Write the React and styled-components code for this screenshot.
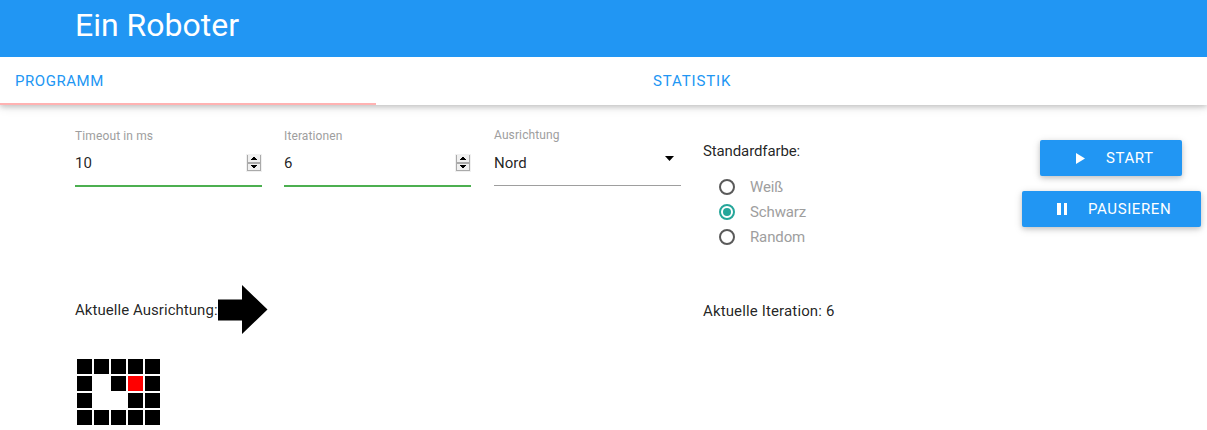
import React from "react";
import styled, { createGlobalStyle } from "styled-components";

const GlobalStyle = createGlobalStyle`
  *, *::before, *::after { box-sizing: border-box; }
  html, body { margin: 0; overflow: hidden; background: #fff; }
  body {
    font-family: Roboto, "Liberation Sans", sans-serif;
    font-size: 15px;
    line-height: 22px;
    color: rgba(0, 0, 0, 0.87);
  }
`;

const Page = styled.div`
  width: 1207px;
  height: 430px;
  overflow: hidden;
`;

const Header = styled.header`
  position: relative;
  z-index: 1;
  height: 57px;
  padding-left: 75px;
  background: #2196f3;
`;

const Title = styled.h1`
  margin: 0;
  font-size: 32px;
  font-weight: 400;
  line-height: 50px;
  color: #fff;
`;

const Tabs = styled.nav`
  display: flex;
  height: 48px;
  background: #fff;
  box-shadow: 0 2px 5px 0 rgba(0, 0, 0, 0.16), 0 2px 10px 0 rgba(0, 0, 0, 0.12);
`;

const Tab = styled.div`
  width: ${(p) => p.$width}px;
  height: 48px;
  padding-left: 15px;
  line-height: 48px;
  letter-spacing: ${(p) => p.$spacing}px;
  text-transform: uppercase;
  color: #2196f3;
`;

const ActiveTab = styled(Tab)`
  border-bottom: 2px solid #ffb2b2;
`;

const Controls = styled.section`
  display: flex;
  height: 173px;
  padding-left: 75px;
`;

const Field = styled.div`
  width: 187px;
  margin-right: ${(p) => p.$gap}px;
  padding-top: 22px;
`;

const Label = styled.div`
  height: 16px;
  margin-top: ${(p) => p.$shift || 0}px;
  margin-bottom: ${(p) => -(p.$shift || 0)}px;
  font-size: 12px;
  letter-spacing: 0.12px;
  line-height: 18px;
  color: #9e9e9e;
`;

const Value = styled.div`
  display: flex;
  justify-content: space-between;
  height: ${(p) => (p.$valid ? 44 : 43)}px;
  padding-top: 9px;
  border-bottom: ${(p) => (p.$valid ? "2px solid #4caf50" : "1px solid #9e9e9e")};
`;

const Spinner = styled.svg`
  display: block;
  width: 16px;
  height: 18px;
  margin-top: 2px;
`;

const Caret = styled.svg`
  display: block;
  width: 9px;
  height: 5px;
  margin: 4px 7px 0 0;
`;

const ColorGroup = styled.div`
  width: 319px;
  padding-top: 35px;
  letter-spacing: -0.12px;
`;

const Options = styled.div`
  padding: 12px 0 0 16px;
`;

const Option = styled.label`
  display: flex;
  align-items: center;
  gap: 15px;
  height: 25px;
  color: #9e9e9e;
`;

const Radio = styled.span`
  width: 16px;
  height: 16px;
  border: 2px solid ${(p) => (p.$on ? "#26a69a" : "#5a5a5a")};
  border-radius: 50%;
  padding: 2px;
  &::before {
    content: "";
    display: block;
    width: 8px;
    height: 8px;
    border-radius: 50%;
    background: ${(p) => (p.$on ? "#26a69a" : "transparent")};
  }
`;

const Actions = styled.div`
  display: flex;
  flex-direction: column;
  align-items: center;
  gap: 15px;
  width: 179px;
  padding-top: 35px;
`;

const Button = styled.button`
  display: flex;
  flex-shrink: 0;
  width: ${(p) => p.$width}px;
  height: 36px;
  margin-right: ${(p) => p.$offset || 0}px;
  padding: 0 0 0 30px;
  border: 0;
  border-radius: 2px;
  background: #2196f3;
  color: #fff;
  font: 400 15px/36px Roboto, sans-serif;
  letter-spacing: 0.6px;
  text-transform: uppercase;
  box-shadow: 0 2px 5px 0 rgba(0, 0, 0, 0.16), 0 2px 10px 0 rgba(0, 0, 0, 0.12);
`;

const ButtonIcon = styled.svg`
  width: 21px;
  height: 36px;
  margin-right: 15px;
  fill: #fff;
`;

const Status = styled.section`
  display: flex;
  padding: 7px 0 0 75px;
  height: 80px;
`;

const Direction = styled.div`
  display: flex;
  width: 628px;
  line-height: 50px;
  letter-spacing: 0.05px;
`;

const Arrow = styled.svg`
  width: 50px;
  height: 50px;
`;

const Iteration = styled.div`
  line-height: 52px;
  letter-spacing: 0.14px;
`;

const Board = styled.div`
  display: grid;
  grid-template-columns: repeat(5, 15px);
  grid-auto-rows: 15px;
  gap: 2px;
  margin-left: 77px;
  padding-top: 1px;
`;

const Cell = styled.div`
  background: ${(p) => p.$color};
`;

const cellColors = { b: "#000", w: "#fff", r: "#f00" };
const cells = "bbbbb" + "bwbrb" + "bwwbb" + "bbbbb";

function NumberField({ label, value, gap }) {
  return (
    <Field $gap={gap}>
      <Label>{label}</Label>
      <Value $valid>
        {value}
        <Spinner viewBox="0 0 16 18" shapeRendering="crispEdges">
          <path fill="#f0f0f0" d="M0 0h16v18H0z" />
          <path fill="#aaa" d="M1 1h1v16H1zM14 1h1v16h-1zM1 8h14v2H1zM1 16h14v1H1z" />
          <path d="M7 3h2v1H7zM6 4h4v1H6zM5 5h6v1H5zM5 11h6v1H5zM6 12h4v1H6zM7 13h2v1H7z" />
        </Spinner>
      </Value>
    </Field>
  );
}

export default function App() {
  return (
    <Page>
      <GlobalStyle />
      <Header>
        <Title>Ein Roboter</Title>
      </Header>
      <Tabs>
        <ActiveTab $width={376} $spacing={0.55}>Programm</ActiveTab>
        <Tab $width={262} />
        <Tab $width={569} $spacing={0.85}>Statistik</Tab>
      </Tabs>
      <Controls>
        <NumberField label="Timeout in ms" value="10" gap={22} />
        <NumberField label="Iterationen" value="6" gap={23} />
        <Field $gap={22}>
          <Label $shift={-1}>Ausrichtung</Label>
          <Value>
            Nord
            <Caret viewBox="0 0 9 5">
              <path d="M0 0h9L4.5 5z" />
            </Caret>
          </Value>
        </Field>
        <ColorGroup>
          Standardfarbe:
          <Options>
            <Option><Radio />Weiß</Option>
            <Option><Radio $on />Schwarz</Option>
            <Option><Radio />Random</Option>
          </Options>
        </ColorGroup>
        <Actions>
          <Button $width={142} $offset={1}>
            <ButtonIcon viewBox="0 0 21 36">
              <path d="M6 13v11l9-5.5z" />
            </ButtonIcon>
            Start
          </Button>
          <Button $width={179}>
            <ButtonIcon viewBox="0 0 21 36">
              <path d="M5 12h4v12H5zM12 12h3v12h-3z" />
            </ButtonIcon>
            Pausieren
          </Button>
        </Actions>
      </Controls>
      <Status>
        <Direction>
          Aktuelle Ausrichtung:
          <Arrow viewBox="0 0 50 50">
            <path d="M0 14.5h24V0L49.5 24.5 24 49V35.5H0z" />
          </Arrow>
        </Direction>
        <Iteration>Aktuelle Iteration: 6</Iteration>
      </Status>
      <Board>
        {[...cells].map((c, i) => (
          <Cell key={i} $color={cellColors[c]} />
        ))}
      </Board>
    </Page>
  );
}
